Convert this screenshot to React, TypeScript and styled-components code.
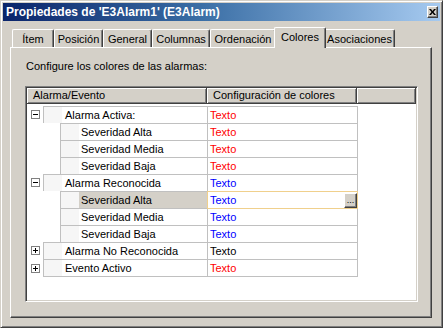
import React from 'react'
import styled, { createGlobalStyle } from 'styled-components'

const GlobalStyle = createGlobalStyle`
  html, body { margin: 0; padding: 0; background: #d4d0c8; }
  body { font-family: "Liberation Sans", Arial, sans-serif; font-size: 11px; }
`

const Window = styled.div`
  width: 443px;
  height: 328px;
  box-sizing: border-box;
  background: #d4d0c8;
  border: 1px solid;
  border-color: #d4d0c8 #404040 #404040 #d4d0c8;
  box-shadow: inset 1px 1px #fff, inset -1px -1px #808080;
  padding: 2px;
  display: flex;
  flex-direction: column;
`

const TitleBar = styled.div`
  height: 18px;
  flex: none;
  display: flex;
  align-items: center;
  justify-content: space-between;
  padding: 0 2px 0 3px;
  background: linear-gradient(90deg, #0a246a 0%, #3a6ea5 45%, #a6caf0 100%);
  color: #fff;
  font-weight: bold;
  font-size: 12px;
`

const CloseButton = styled.div`
  width: 11px;
  height: 12px;
  box-sizing: border-box;
  background: #d4d0c8;
  border: 1px solid;
  border-color: #fff #404040 #404040 #fff;
  box-shadow: inset -1px -1px #808080;
  display: flex;
  align-items: center;
  justify-content: center;
  padding: 0 1px 1px 0;
`

const Body = styled.div`
  flex: 1;
  display: flex;
  flex-direction: column;
  padding: 6px 8px 7px 7px;
`

const TabRow = styled.div`
  height: 20px;
  flex: none;
  display: flex;
  align-items: flex-end;
  padding-left: 2px;
  position: relative;
  z-index: 1;
`

const Tab = styled.div<{ $w: number; $active?: boolean }>`
  width: ${p => p.$w}px;
  height: ${p => (p.$active ? 21 : 18)}px;
  box-sizing: border-box;
  margin: ${p => (p.$active ? '0 -2px -1px -2px' : '0')};
  position: relative;
  z-index: ${p => (p.$active ? 2 : 1)};
  background: #d4d0c8;
  border-top: 1px solid #fff;
  border-left: 1px solid #fff;
  border-right: 1px solid #404040;
  border-radius: 2px 2px 0 0;
  box-shadow: inset -1px 0 #808080;
  display: flex;
  align-items: center;
  justify-content: center;
  padding-bottom: ${p => (p.$active ? 3 : 0)}px;
  color: #000;
`

const Panel = styled.div`
  flex: 1;
  display: flex;
  flex-direction: column;
  border: 1px solid;
  border-color: #fff #404040 #404040 #fff;
  box-shadow: inset -1px -1px #808080;
  padding: 12px 13px 0 14px;
`

const Description = styled.div`
  line-height: 13px;
  margin-left: 1px;
  color: #000;
`

const ListView = styled.div`
  margin-top: 13px;
  height: 216px;
  box-sizing: border-box;
  background: #fff;
  border: 1px solid;
  border-color: #808080 #fff #fff #808080;
  padding: 1px;
  box-shadow: inset 1px 1px #404040, inset -1px -1px #d4d0c8;
`

const Header = styled.div`
  display: flex;
  height: 16px;
`

const HeaderCell = styled.div<{ $w?: number }>`
  ${p => (p.$w ? `width: ${p.$w}px; flex: none;` : 'flex: 1;')}
  box-sizing: border-box;
  background: #d4d0c8;
  border-right: 1px solid #404040;
  border-bottom: 1px solid #404040;
  box-shadow: inset 1px 1px #fff, inset -1px -1px #808080;
  padding-left: 6px;
  line-height: 14px;
  white-space: nowrap;
  overflow: hidden;
`

const Rows = styled.div`
  padding-top: 2px;
`

const Row = styled.div`
  display: flex;
  width: 331px;
`

const Expander = styled.div`
  width: 16px;
  flex: none;
  display: flex;
  align-items: center;
  justify-content: center;
  padding-left: 1px;
  box-sizing: border-box;
`

const ToggleBox = styled.div`
  width: 9px;
  height: 9px;
  box-sizing: border-box;
  border: 1px solid #808080;
  background: #fff;
  position: relative;
`

const Spacer = styled.div`
  width: 17px;
  flex: none;
`

const NameCell = styled.div<{ $last?: boolean }>`
  flex: 1;
  display: flex;
  height: ${p => (p.$last ? 18 : 17)}px;
  box-sizing: border-box;
  border-top: 1px solid #c0c0c0;
  border-left: 1px solid #c0c0c0;
  border-bottom: ${p => (p.$last ? '1px solid #c0c0c0' : 'none')};
`

const Indent = styled.div`
  width: 18px;
  flex: none;
  background: #f6f6f6;
`

const Label = styled.div<{ $selected?: boolean; $child?: boolean }>`
  flex: 1;
  background: ${p => (p.$selected ? '#d4d0c8' : '#fff')};
  padding-left: ${p => (p.$child ? 2 : 3)}px;
  line-height: 16px;
  white-space: nowrap;
  color: #000;
`

const ValueCell = styled.div<{ $color: string; $last?: boolean; $selected?: boolean }>`
  width: 151px;
  flex: none;
  height: ${p => (p.$last ? 18 : 17)}px;
  box-sizing: border-box;
  border: 1px solid ${p => (p.$selected ? '#f0d08c' : '#c0c0c0')};
  border-bottom: ${p => (p.$last ? '1px solid #c0c0c0' : 'none')};
  box-shadow: ${p => (p.$selected ? '0 1px 0 #f0d08c' : 'none')};
  position: relative;
  z-index: ${p => (p.$selected ? 1 : 0)};
  display: flex;
  align-items: center;
  justify-content: space-between;
  padding-left: 2px;
  line-height: 16px;
  color: ${p => p.$color};
`

const DotsButton = styled.div`
  width: 13px;
  height: 15px;
  box-sizing: border-box;
  background: #d4d0c8;
  border: 1px solid;
  border-color: #fff #404040 #404040 #fff;
  box-shadow: inset -1px -1px #808080;
  color: #000;
  font-size: 9px;
  line-height: 10px;
  display: flex;
  align-items: flex-end;
  justify-content: center;
  padding-bottom: 2px;
`

type Item = {
  label: string
  color: string
  child?: boolean
  toggle?: '+' | '-'
  selected?: boolean
}

const RED = '#ff0000'
const BLUE = '#0000ff'

const items: Item[] = [
  { label: 'Alarma Activa:', color: RED, toggle: '-' },
  { label: 'Severidad Alta', color: RED, child: true },
  { label: 'Severidad Media', color: RED, child: true },
  { label: 'Severidad Baja', color: RED, child: true },
  { label: 'Alarma Reconocida', color: BLUE, toggle: '-' },
  { label: 'Severidad Alta', color: BLUE, child: true, selected: true },
  { label: 'Severidad Media', color: BLUE, child: true },
  { label: 'Severidad Baja', color: BLUE, child: true },
  { label: 'Alarma No Reconocida', color: '#000', toggle: '+' },
  { label: 'Evento Activo', color: RED, toggle: '+' },
]

const tabs = [
  { label: 'Ítem', w: 42 },
  { label: 'Posición', w: 49 },
  { label: 'General', w: 49 },
  { label: 'Columnas', w: 58 },
  { label: 'Ordenación', w: 66 },
  { label: 'Colores', w: 52, active: true },
  { label: 'Asociaciones', w: 71 },
]

function Toggle({ sign }: { sign: '+' | '-' }) {
  return (
    <ToggleBox>
      <svg width="7" height="7" viewBox="0 0 7 7" style={{ display: 'block' }}>
        <rect x="1" y="3" width="5" height="1" fill="#000" />
        {sign === '+' && <rect x="3" y="1" width="1" height="5" fill="#000" />}
      </svg>
    </ToggleBox>
  )
}

export default function App() {
  return (
    <>
      <GlobalStyle />
      <Window>
        <TitleBar>
          <span>Propiedades de 'E3Alarm1' (E3Alarm)</span>
          <CloseButton>
            <svg width="7" height="6" viewBox="0 0 7 6" style={{ display: 'block' }}>
              <path d="M0 0h2l1.5 2L5 0h2L4.5 3 7 6H5L3.5 4 2 6H0l2.5-3z" fill="#000" />
            </svg>
          </CloseButton>
        </TitleBar>
        <Body>
          <TabRow>
            {tabs.map(t => (
              <Tab key={t.label} $w={t.w} $active={t.active}>
                {t.label}
              </Tab>
            ))}
          </TabRow>
          <Panel>
            <Description>Configure los colores de las alarmas:</Description>
            <ListView>
              <Header>
                <HeaderCell $w={180}>Alarma/Evento</HeaderCell>
                <HeaderCell $w={150}>Configuración de colores</HeaderCell>
                <HeaderCell />
              </Header>
              <Rows>
                {items.map((it, i) => {
                  const last = i === items.length - 1
                  return (
                    <Row key={i}>
                      <Expander>{it.toggle && <Toggle sign={it.toggle} />}</Expander>
                      {it.child && <Spacer />}
                      <NameCell $last={last}>
                        <Indent />
                        <Label $selected={it.selected} $child={it.child}>
                          {it.label}
                        </Label>
                      </NameCell>
                      <ValueCell $color={it.color} $last={last} $selected={it.selected}>
                        <span>Texto</span>
                        {it.selected && <DotsButton>...</DotsButton>}
                      </ValueCell>
                    </Row>
                  )
                })}
              </Rows>
            </ListView>
          </Panel>
        </Body>
      </Window>
    </>
  )
}
